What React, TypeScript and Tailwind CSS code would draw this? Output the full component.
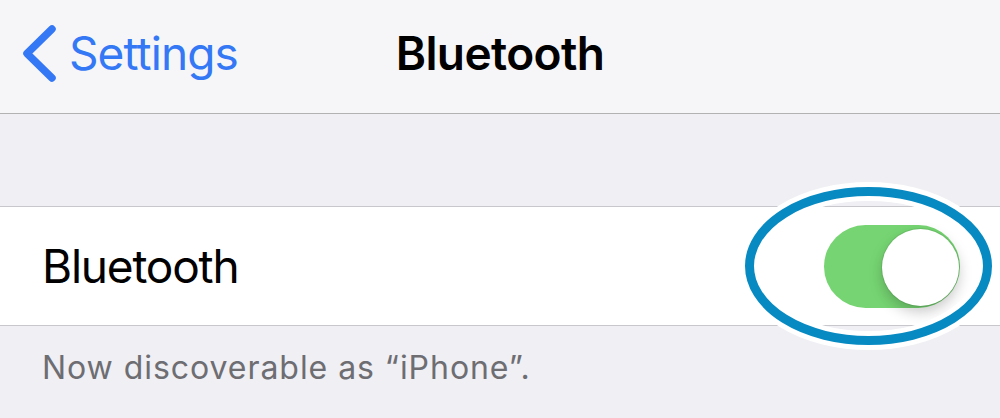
export default function App() {
  return (
    <div className="relative w-[1000px] h-[418px] overflow-hidden bg-[#efeff4] font-['Inter',sans-serif]">
      {/* Nav bar */}
      <div className="h-[114px] bg-[#f6f6f8] border-b border-[#b2b2b2] grid grid-cols-[1fr_auto_1fr] items-start pt-[30px]">
        <div className="flex items-start">
          <svg width="69" height="60" viewBox="0 0 69 60" className="-mt-[5px] shrink-0">
            <path d="M52 4 L27 28.5 L52 53" fill="none" stroke="#3478f6" strokeWidth="7.5" strokeLinecap="round" strokeLinejoin="round" />
          </svg>
          <span className="text-[46px] leading-[46px] tracking-[-0.9px] text-[#3478f6]">Settings</span>
        </div>
        <div className="text-[46px] leading-[46px] tracking-[-0.6px] font-semibold text-black">Bluetooth</div>
        <div />
      </div>

      {/* Spacer */}
      <div className="h-[92px]" />

      {/* Row */}
      <div className="h-[120px] bg-white border-y border-[#c8c7cc] flex items-center justify-between pl-[42px] pr-[40px]">
        <span className="text-[46px] leading-[46px] tracking-[-1.2px] text-black">Bluetooth</span>
        <div className="w-[136px] h-[83px] rounded-full bg-[#76d572] flex items-center justify-end pr-[1px] pt-[2px]">
          <div className="w-[77px] h-[77px] rounded-full bg-white shadow-[0_6px_14px_rgba(0,0,0,0.22),0_0_0_1px_rgba(0,0,0,0.08)]" />
        </div>
      </div>

      {/* Footer */}
      <div className="pl-[42px] pt-[26px]">
        <span className="text-[32px] leading-[32px] tracking-[0.95px] text-[#6d6d72]">Now discoverable as “iPhone”.</span>
      </div>

      {/* Highlight ellipse */}
      <svg className="absolute left-[740px] top-[180px]" width="260" height="172" viewBox="0 0 260 172">
        <ellipse cx="128.5" cy="86" rx="119" ry="74.5" fill="none" stroke="#ffffff" strokeWidth="19" />
        <ellipse cx="128.5" cy="86" rx="119" ry="74.5" fill="none" stroke="#078ac2" strokeWidth="9" />
      </svg>
    </div>
  );
}
